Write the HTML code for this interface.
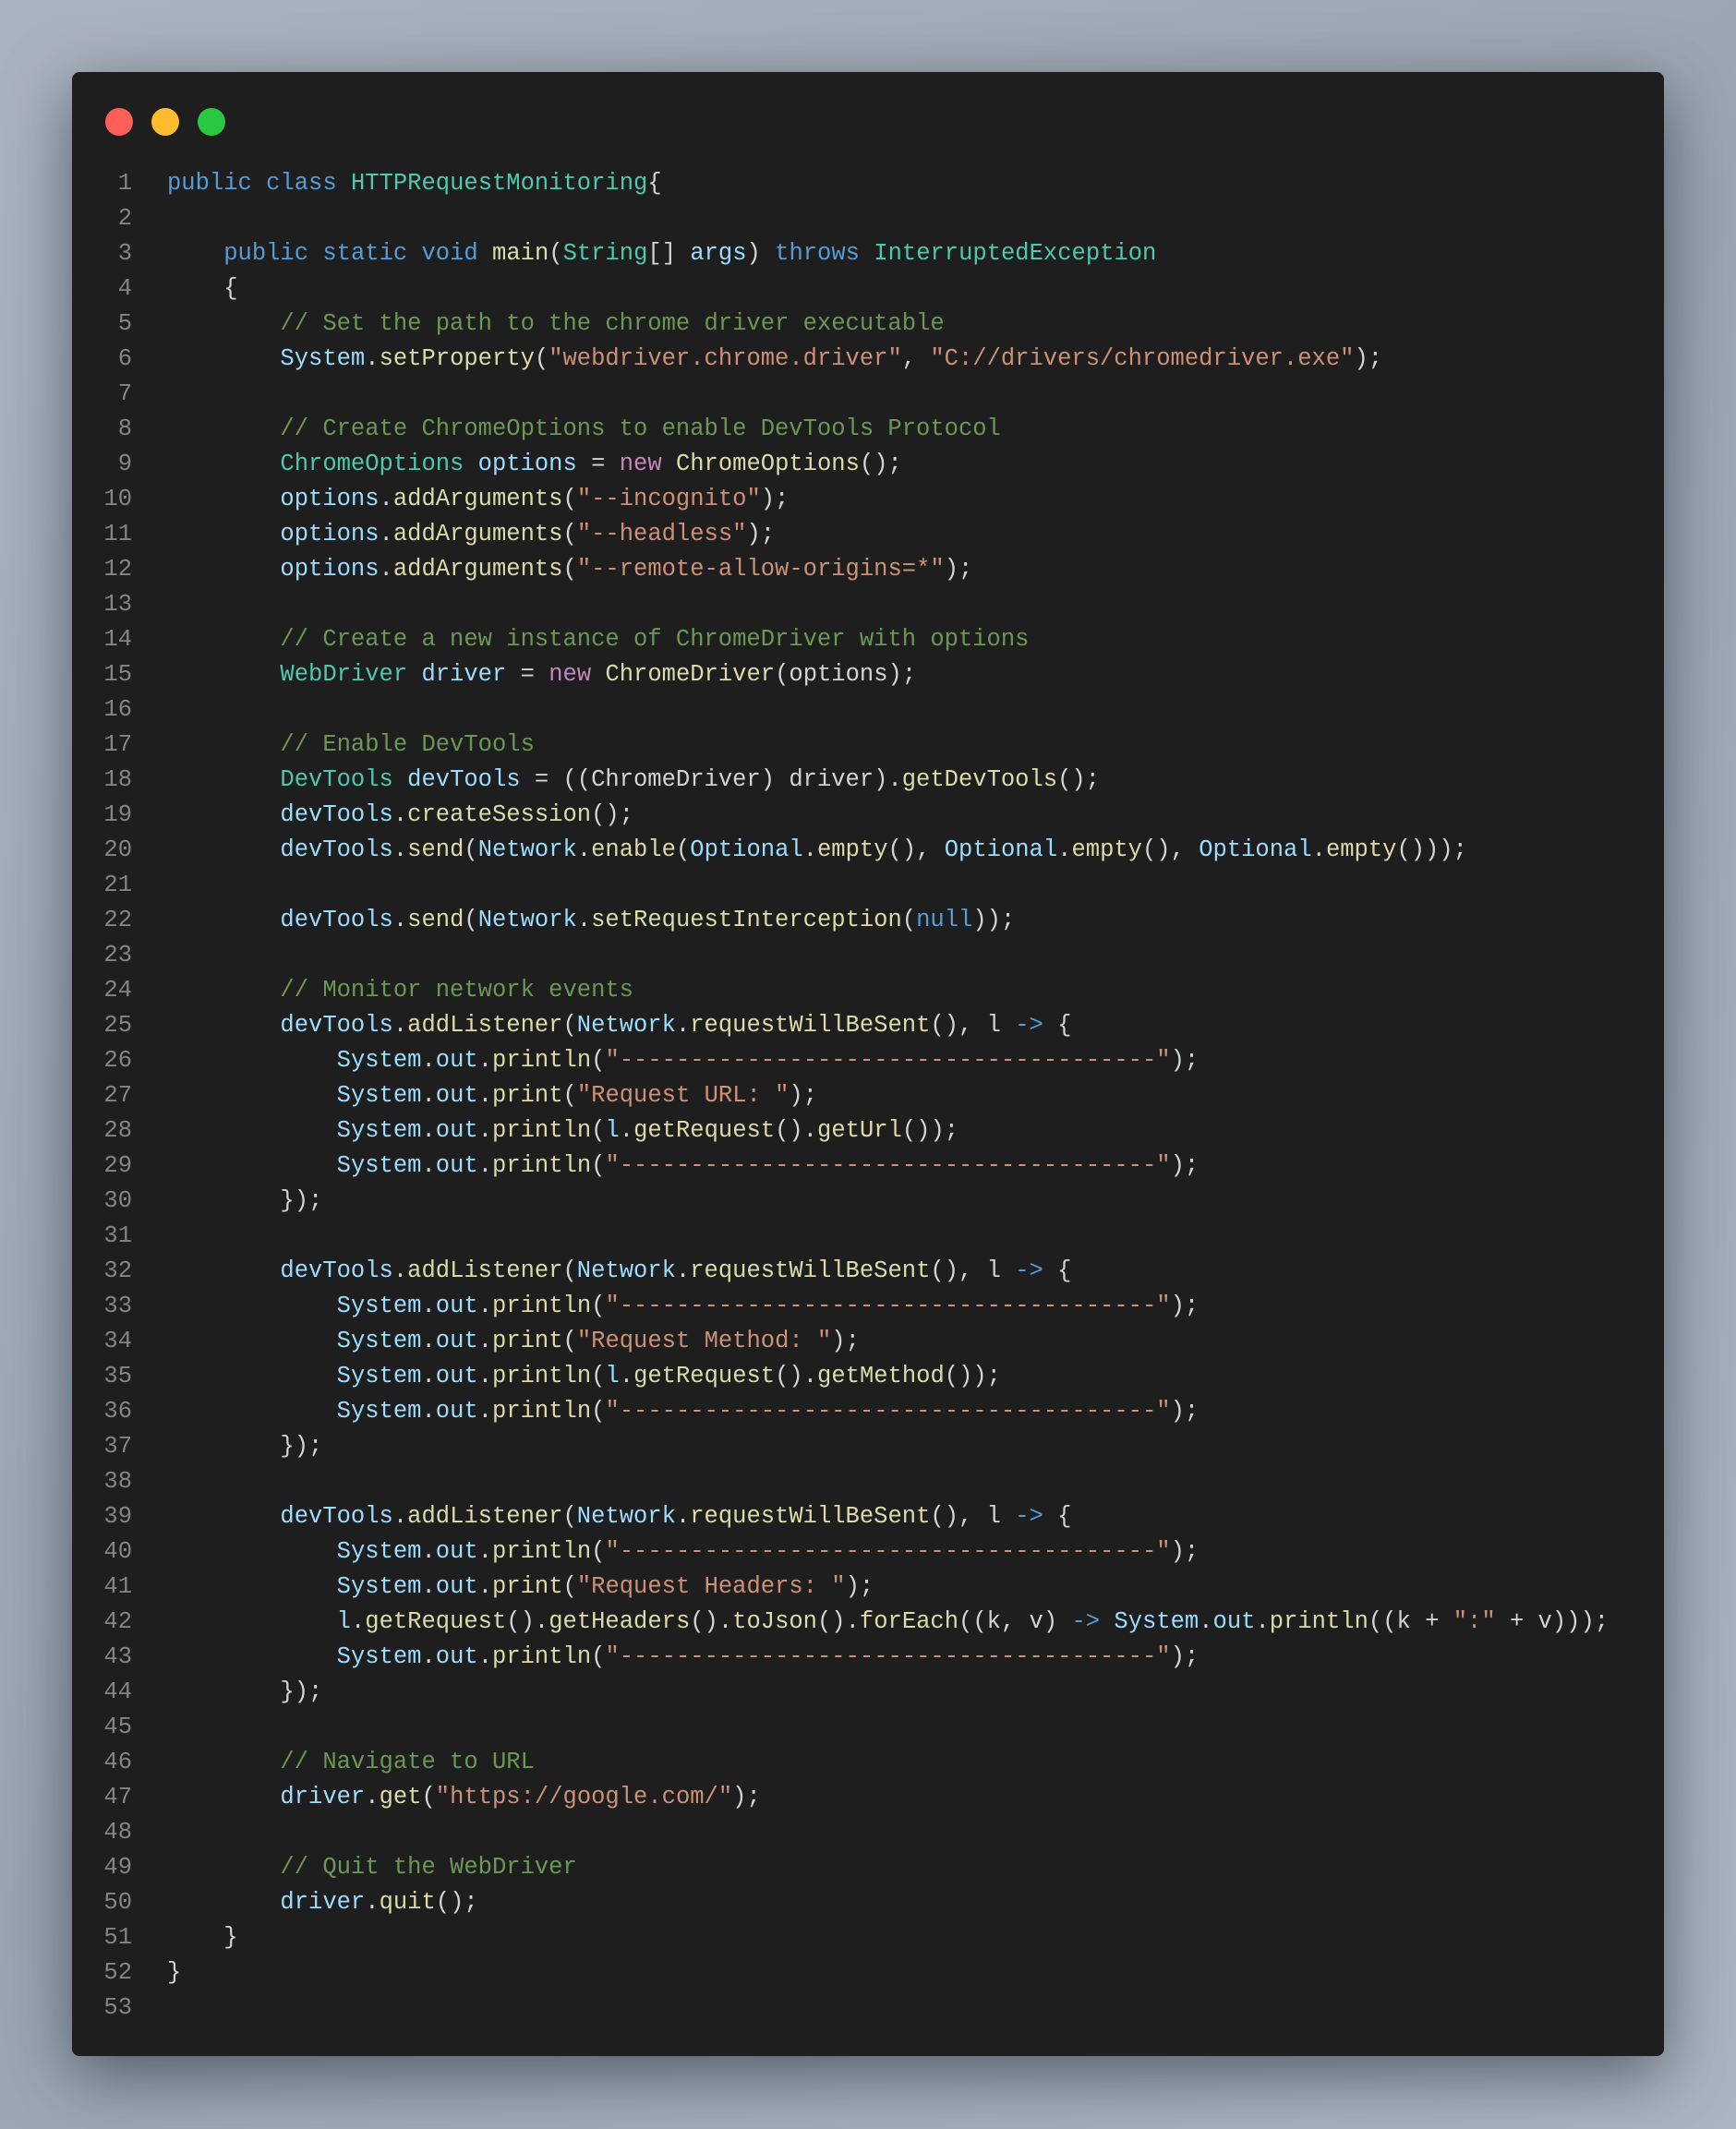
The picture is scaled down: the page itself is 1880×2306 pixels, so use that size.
<!DOCTYPE html>
<html><head><meta charset="utf-8"><style>
html,body{margin:0;padding:0}
body{width:1880px;height:2306px;background:linear-gradient(135deg,#aab4bf 0%,#9aa5b1 50%,#aab5c0 100%);position:relative;overflow:hidden}
.win{position:absolute;left:78px;top:78px;width:1724px;height:2149px;background:#1e1e1e;border-radius:8px;box-shadow:0 20px 70px rgba(20,30,45,.55)}
.dot{position:absolute;top:117px;width:30px;height:30px;border-radius:50%}
pre{position:absolute;left:0;top:180px;margin:0;font-family:"Liberation Mono",monospace;font-size:25.5px;line-height:38px;color:#d4d4d4;white-space:pre}
.ln{display:inline-block;width:143px;text-align:right;color:#858585;margin-right:38px}
.k{color:#569cd6}.t{color:#4ec9b0}.f{color:#dcdcaa}.v{color:#9cdcfe}.s{color:#ce9178}.c{color:#6a9955}.p{color:#c586c0}
</style></head><body>
<div class="win"></div>
<div class="dot" style="left:114px;background:#ff5f57"></div>
<div class="dot" style="left:164px;background:#febc2e"></div>
<div class="dot" style="left:214px;background:#28c840"></div>
<pre><span class="ln">1</span><span class="k">public</span> <span class="k">class</span> <span class="t">HTTPRequestMonitoring</span>{
<span class="ln">2</span>
<span class="ln">3</span>    <span class="k">public</span> <span class="k">static</span> <span class="k">void</span> <span class="f">main</span>(<span class="t">String</span>[] <span class="v">args</span>) <span class="k">throws</span> <span class="t">InterruptedException</span>
<span class="ln">4</span>    {
<span class="ln">5</span>        <span class="c">// Set the path to the chrome driver executable</span>
<span class="ln">6</span>        <span class="v">System</span>.<span class="f">setProperty</span>(<span class="s">"webdriver.chrome.driver"</span>, <span class="s">"C://drivers/chromedriver.exe"</span>);
<span class="ln">7</span>
<span class="ln">8</span>        <span class="c">// Create ChromeOptions to enable DevTools Protocol</span>
<span class="ln">9</span>        <span class="t">ChromeOptions</span> <span class="v">options</span> = <span class="p">new</span> <span class="f">ChromeOptions</span>();
<span class="ln">10</span>        <span class="v">options</span>.<span class="f">addArguments</span>(<span class="s">"--incognito"</span>);
<span class="ln">11</span>        <span class="v">options</span>.<span class="f">addArguments</span>(<span class="s">"--headless"</span>);
<span class="ln">12</span>        <span class="v">options</span>.<span class="f">addArguments</span>(<span class="s">"--remote-allow-origins=*"</span>);
<span class="ln">13</span>
<span class="ln">14</span>        <span class="c">// Create a new instance of ChromeDriver with options</span>
<span class="ln">15</span>        <span class="t">WebDriver</span> <span class="v">driver</span> = <span class="p">new</span> <span class="f">ChromeDriver</span>(options);
<span class="ln">16</span>
<span class="ln">17</span>        <span class="c">// Enable DevTools</span>
<span class="ln">18</span>        <span class="t">DevTools</span> <span class="v">devTools</span> = ((ChromeDriver) driver).<span class="f">getDevTools</span>();
<span class="ln">19</span>        <span class="v">devTools</span>.<span class="f">createSession</span>();
<span class="ln">20</span>        <span class="v">devTools</span>.<span class="f">send</span>(<span class="v">Network</span>.<span class="f">enable</span>(<span class="v">Optional</span>.<span class="f">empty</span>(), <span class="v">Optional</span>.<span class="f">empty</span>(), <span class="v">Optional</span>.<span class="f">empty</span>()));
<span class="ln">21</span>
<span class="ln">22</span>        <span class="v">devTools</span>.<span class="f">send</span>(<span class="v">Network</span>.<span class="f">setRequestInterception</span>(<span class="k">null</span>));
<span class="ln">23</span>
<span class="ln">24</span>        <span class="c">// Monitor network events</span>
<span class="ln">25</span>        <span class="v">devTools</span>.<span class="f">addListener</span>(<span class="v">Network</span>.<span class="f">requestWillBeSent</span>(), l <span class="k">-&gt;</span> {
<span class="ln">26</span>            <span class="v">System</span>.<span class="v">out</span>.<span class="f">println</span>(<span class="s">"--------------------------------------"</span>);
<span class="ln">27</span>            <span class="v">System</span>.<span class="v">out</span>.<span class="f">print</span>(<span class="s">"Request URL: "</span>);
<span class="ln">28</span>            <span class="v">System</span>.<span class="v">out</span>.<span class="f">println</span>(<span class="v">l</span>.<span class="f">getRequest</span>().<span class="f">getUrl</span>());
<span class="ln">29</span>            <span class="v">System</span>.<span class="v">out</span>.<span class="f">println</span>(<span class="s">"--------------------------------------"</span>);
<span class="ln">30</span>        });
<span class="ln">31</span>
<span class="ln">32</span>        <span class="v">devTools</span>.<span class="f">addListener</span>(<span class="v">Network</span>.<span class="f">requestWillBeSent</span>(), l <span class="k">-&gt;</span> {
<span class="ln">33</span>            <span class="v">System</span>.<span class="v">out</span>.<span class="f">println</span>(<span class="s">"--------------------------------------"</span>);
<span class="ln">34</span>            <span class="v">System</span>.<span class="v">out</span>.<span class="f">print</span>(<span class="s">"Request Method: "</span>);
<span class="ln">35</span>            <span class="v">System</span>.<span class="v">out</span>.<span class="f">println</span>(<span class="v">l</span>.<span class="f">getRequest</span>().<span class="f">getMethod</span>());
<span class="ln">36</span>            <span class="v">System</span>.<span class="v">out</span>.<span class="f">println</span>(<span class="s">"--------------------------------------"</span>);
<span class="ln">37</span>        });
<span class="ln">38</span>
<span class="ln">39</span>        <span class="v">devTools</span>.<span class="f">addListener</span>(<span class="v">Network</span>.<span class="f">requestWillBeSent</span>(), l <span class="k">-&gt;</span> {
<span class="ln">40</span>            <span class="v">System</span>.<span class="v">out</span>.<span class="f">println</span>(<span class="s">"--------------------------------------"</span>);
<span class="ln">41</span>            <span class="v">System</span>.<span class="v">out</span>.<span class="f">print</span>(<span class="s">"Request Headers: "</span>);
<span class="ln">42</span>            <span class="v">l</span>.<span class="f">getRequest</span>().<span class="f">getHeaders</span>().<span class="f">toJson</span>().<span class="f">forEach</span>((k, v) <span class="k">-&gt;</span> <span class="v">System</span>.<span class="v">out</span>.<span class="f">println</span>((k + <span class="s">":"</span> + v)));
<span class="ln">43</span>            <span class="v">System</span>.<span class="v">out</span>.<span class="f">println</span>(<span class="s">"--------------------------------------"</span>);
<span class="ln">44</span>        });
<span class="ln">45</span>
<span class="ln">46</span>        <span class="c">// Navigate to URL</span>
<span class="ln">47</span>        <span class="v">driver</span>.<span class="f">get</span>(<span class="s">"https://google.com/"</span>);
<span class="ln">48</span>
<span class="ln">49</span>        <span class="c">// Quit the WebDriver</span>
<span class="ln">50</span>        <span class="v">driver</span>.<span class="f">quit</span>();
<span class="ln">51</span>    }
<span class="ln">52</span>}
<span class="ln">53</span>
</pre>
</body></html>
